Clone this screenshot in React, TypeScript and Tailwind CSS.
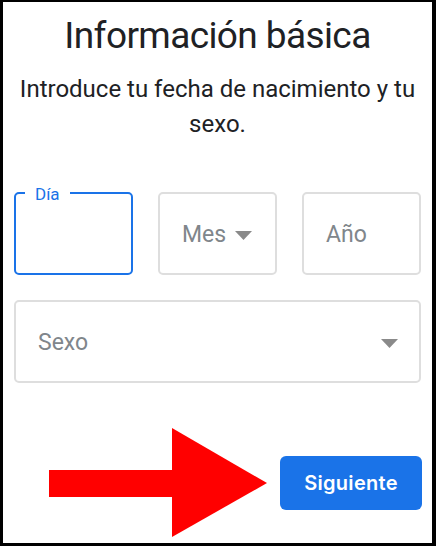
const Caret = ({ className }: { className?: string }) => (
  <svg viewBox="0 0 17 9" className={className} fill="#8a8a8a">
    <polygon points="0,0 17,0 8.5,9" />
  </svg>
)

const Arrow = () => (
  <svg viewBox="0 0 218 109" className="w-[218px] h-[109px] shrink-0">
    <rect x="0" y="42" width="124" height="27" fill="#ff0000" />
    <polygon points="123,0 218,55 123,109" fill="#ff0000" />
  </svg>
)

const App = () => {
  return (
    <div className="w-[436px] h-[546px] bg-white border-black border-t-2 border-l-[3px] border-r-4 border-b-[3px] flex flex-col font-['Roboto',sans-serif]">
      <h1 className="mt-[11px] text-center text-[37px] leading-[46px] tracking-[-0.6px] text-[#202124]">Información básica</h1>
      <p className="mt-[13px] px-[8px] text-center text-[24px] leading-[35px] text-[#202124]">
        Introduce tu fecha de nacimiento y tu sexo.
      </p>

      <div className="mt-[50px] px-[11px] flex gap-[25px]">
        <div className="relative w-[119px] h-[83px] rounded-[5px] border-2 border-[#1a73e8]">
          <span className="absolute -top-[10px] left-[9px] px-[10px] bg-white text-[17px] leading-[20px] text-[#1a73e8]">Día</span>
        </div>
        <div className="w-[119px] h-[83px] rounded-[5px] border-2 border-[#dedede] flex items-center pl-[22px] pt-[3px] gap-[9px]">
          <span className="text-[23px] text-[#80868b]">Mes</span>
          <Caret className="w-[17px] h-[9px]" />
        </div>
        <div className="w-[119px] h-[83px] rounded-[5px] border-2 border-[#dedede] flex items-center pl-[22px] pt-[3px]">
          <span className="text-[23px] text-[#80868b]">Año</span>
        </div>
      </div>

      <div className="mt-[25px] mx-[11px] h-[83px] rounded-[5px] border-2 border-[#dedede] flex items-center justify-between pl-[22px] pr-[21px] pt-[3px]">
        <span className="text-[23px] text-[#80868b]">Sexo</span>
        <Caret className="w-[17px] h-[9px]" />
      </div>

      <div className="mt-[45px] pr-[10px] flex items-center justify-end gap-[13px]">
        <Arrow />
        <button className="w-[142px] h-[54px] rounded-[6px] bg-[#1a73e8] text-white font-['Inter',sans-serif] font-semibold text-[20px] tracking-[0.3px]">
          Siguiente
        </button>
      </div>
    </div>
  )
}

export default App
